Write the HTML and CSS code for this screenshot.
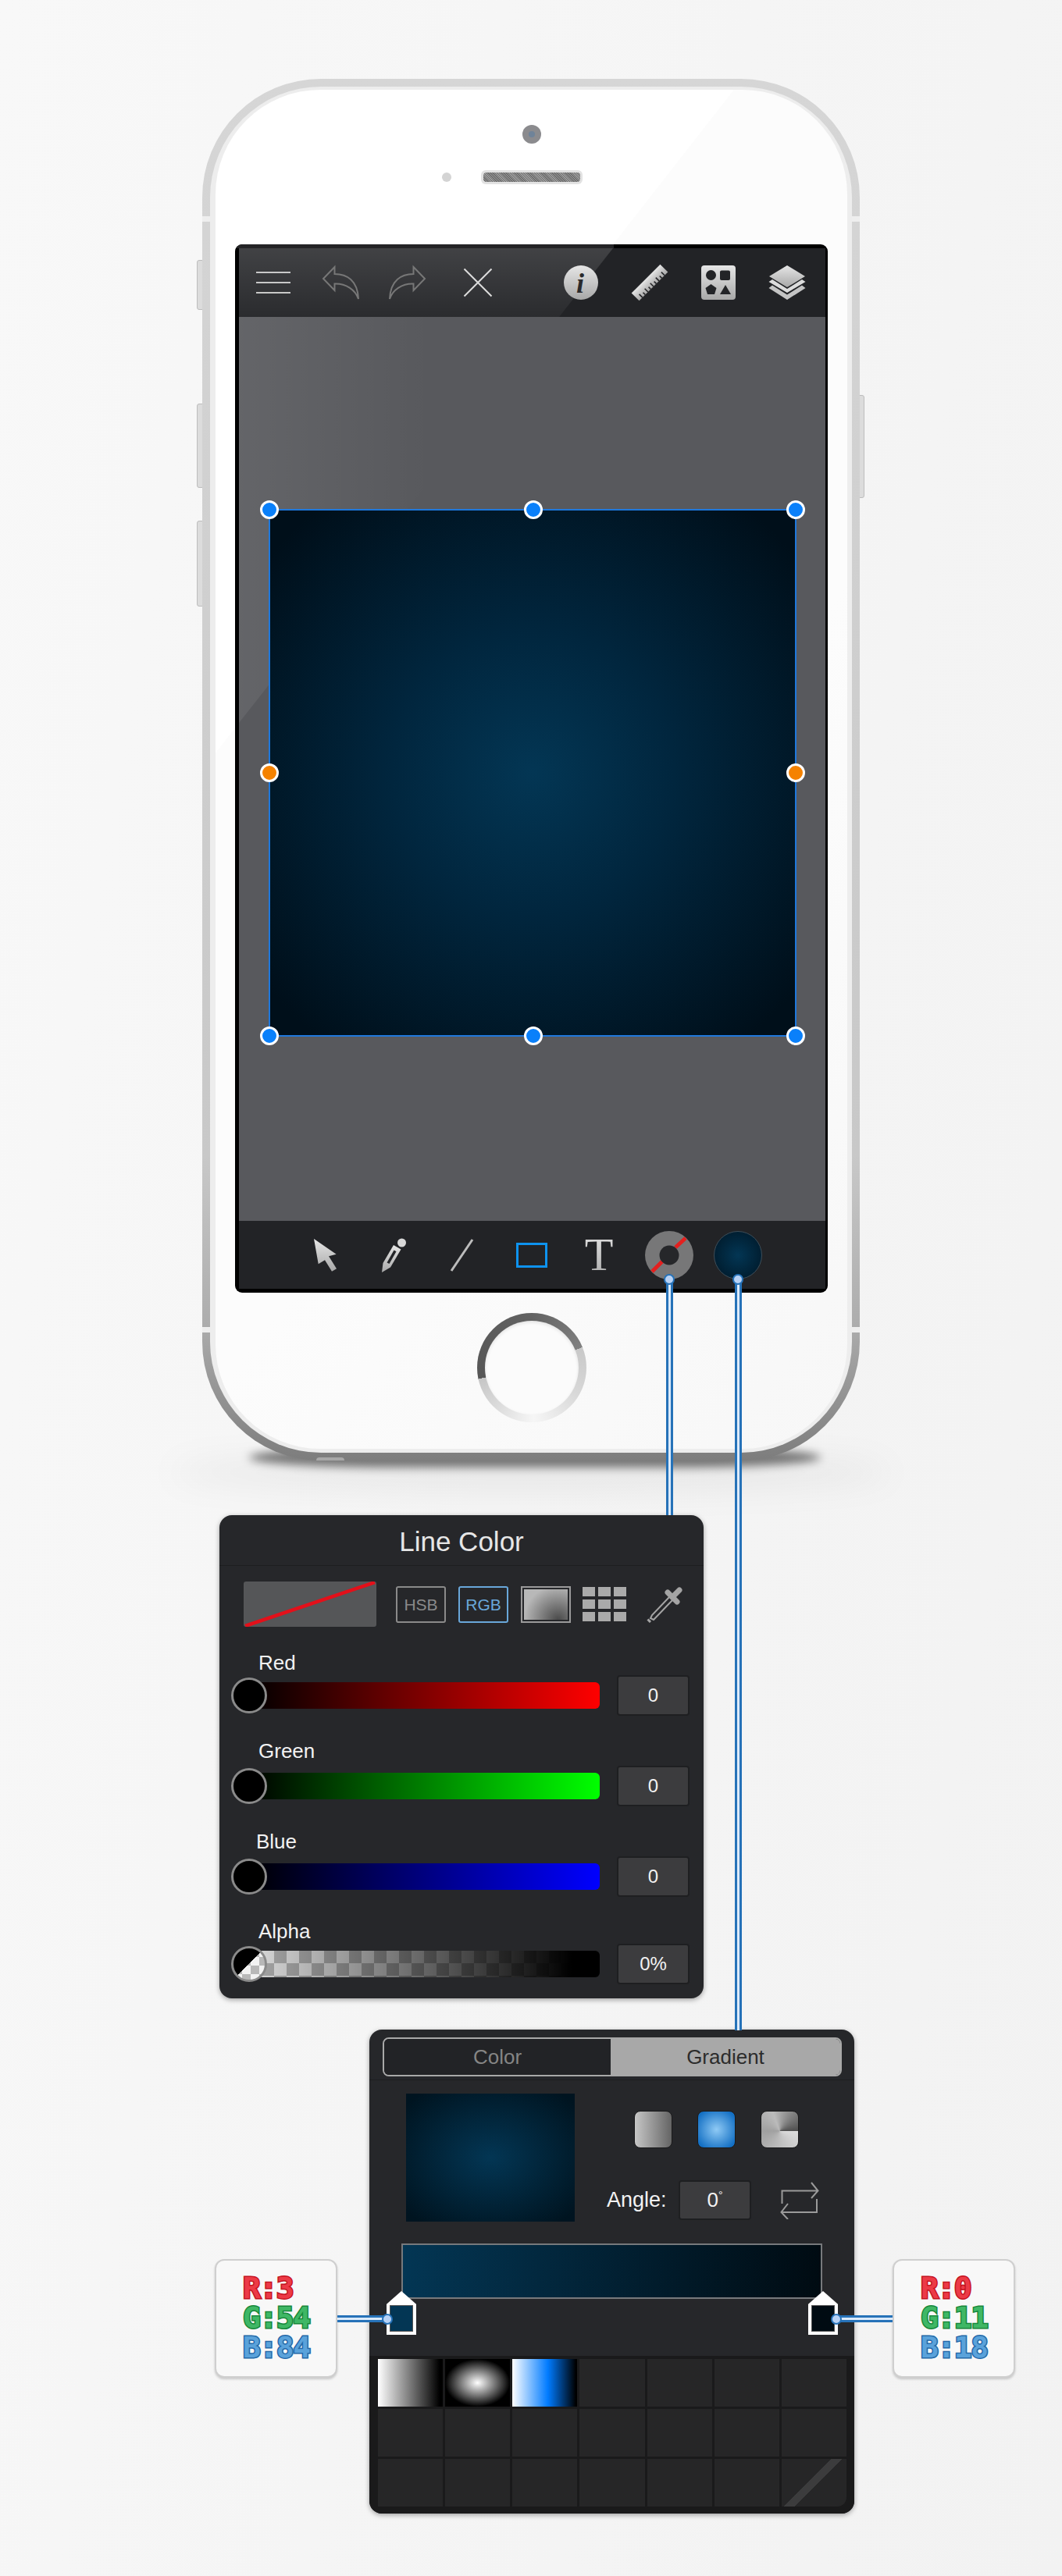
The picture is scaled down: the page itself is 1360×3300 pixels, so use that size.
FILE: index.html
```html
<!DOCTYPE html>
<html lang="en">
<head>
    <meta charset="UTF-8">
    <title>Gradient fill in the drawing app</title>
    <link rel="stylesheet" href="styles.css">
</head>
<body>
    <svg class="svg-defs" width="0" height="0" aria-hidden="true">
        <defs>
            <linearGradient id="metal" x1="0" y1="0" x2="0" y2="1">
                <stop offset="0" stop-color="#e6e6e6"/>
                <stop offset="1" stop-color="#a8a8a8"/>
            </linearGradient>
        </defs>
    </svg>

    <div class="stage">
        <!-- phone -->
        <div class="phone">
            <span class="phone-shadow"></span>
            <span class="phone-shadow phone-shadow-wide"></span>
            <span class="side-btn side-btn-1"></span>
            <span class="side-btn side-btn-2"></span>
            <span class="side-btn side-btn-3"></span>
            <span class="side-btn side-btn-4"></span>
            <span class="bottom-nub"></span>
            <div class="bevel">
                <div class="face">
                    <div class="camera"><span></span></div>
                    <div class="earpiece">
                        <span class="sensor"></span>
                        <span class="speaker"><span></span></span>
                    </div>

                    <div class="screen">
                        <div class="toolbar">
                            <div class="toolbar-left">
                                <svg class="icon48" viewBox="0 0 48 48">
                                    <path d="M2 11H46M2 24H46M2 37H46" stroke="#c8c8c8" stroke-width="2" fill="none"/>
                                </svg>
                                <svg class="icon48" viewBox="0 0 48 48">
                                    <path d="M2 19L16.500 4V13C32 13 46 21 47 45C43 33 31 25 16.500 25.500V34Z" stroke="#777" stroke-width="2" fill="none"/>
                                </svg>
                                <svg class="icon48" viewBox="0 0 48 48">
                                    <path d="M46 19L31.500 4V13C16 13 2 21 1 45C5 33 17 25 31.500 25.500V34Z" stroke="#777" stroke-width="2" fill="none"/>
                                </svg>
                                <svg class="icon48 icon-close" viewBox="0 0 48 48">
                                    <path d="M6.500 6.500L41.500 41.500M41.500 6.500L6.500 41.500" stroke="#dcdcdc" stroke-width="2" fill="none"/>
                                </svg>
                            </div>
                            <div class="toolbar-right">
                                <svg class="icon48" viewBox="0 0 48 48">
                                    <circle cx="24" cy="24" r="22" fill="url(#metal)"/>
                                    <text x="23" y="37" class="info-i">i</text>
                                </svg>
                                <svg class="icon48" viewBox="0 0 48 48">
                                    <g transform="rotate(-45 24 24)">
                                        <rect x="-2" y="17" width="52" height="14" fill="url(#metal)"/>
                                        <path d="M4 31V25M9 31V27M14 31V25M19 31V27M24 31V25M29 31V27M34 31V25M39 31V27M44 31V25" stroke="#232427" stroke-width="1.600"/>
                                    </g>
                                </svg>
                                <svg class="icon48" viewBox="0 0 48 48">
                                    <rect x="2" y="2" width="44" height="44" rx="4" fill="url(#metal)"/>
                                    <circle cx="14.500" cy="14.500" r="6.500" fill="#232427"/>
                                    <rect x="26" y="8.500" width="13" height="12.500" rx="2" fill="#232427"/>
                                    <path d="M14.500 26L21.500 31L19 39H10L7.500 31Z" fill="#232427"/>
                                    <path d="M33 27L40 39H26Z" fill="#232427"/>
                                </svg>
                                <svg class="icon48" viewBox="0 0 48 48">
                                    <path d="M24 2L47 16L24 30L1 16Z" fill="url(#metal)"/>
                                    <path d="M5 20L24 32L43 20L47.500 23L24 37L.5 23Z" fill="#dcdcdc"/>
                                    <path d="M5 27.500L24 39.500L43 27.500L47.500 31L24 46L.5 31Z" fill="#c4c4c4"/>
                                </svg>
                            </div>
                        </div>

                        <div class="canvas">
                            <div class="shape">
                                <span class="handle handle-tl"></span>
                                <span class="handle handle-tc"></span>
                                <span class="handle handle-tr"></span>
                                <span class="handle handle-ml handle-orange"></span>
                                <span class="handle handle-mr handle-orange"></span>
                                <span class="handle handle-bl"></span>
                                <span class="handle handle-bc"></span>
                                <span class="handle handle-br"></span>
                            </div>
                        </div>

                        <div class="tools">
                            <div class="tool">
                                <svg width="30" height="42" viewBox="0 0 30 42">
                                    <path d="M0 0L28.600 19.700L19 22.300L29 38.300L23 41.700L14 27.300L5.700 32.300Z" fill="url(#metal)"/>
                                </svg>
                            </div>
                            <div class="tool">
                                <svg width="32" height="44" viewBox="0 0 32 44">
                                    <circle cx="25.500" cy="6" r="5.500" fill="#d8d8d8"/>
                                    <path d="M1.500 32L15 9L24.500 14.500L11 37.500L0 44Z" fill="url(#metal)"/>
                                    <path d="M6.500 31.500L15.500 15.500L18.500 17.300L9.500 33Z" fill="#232427"/>
                                </svg>
                            </div>
                            <div class="tool tool-line">
                                <svg width="31" height="42" viewBox="0 0 31 42">
                                    <path d="M29 1L2 41" stroke="#bcbcbc" stroke-width="3" fill="none"/>
                                </svg>
                            </div>
                            <div class="tool"><span class="tool-rect"></span></div>
                            <div class="tool">
                                <svg width="40" height="68" viewBox="0 0 40 68">
                                    <text x="18" y="53" class="tool-t">T</text>
                                </svg>
                            </div>
                            <div class="tool">
                                <svg width="62" height="62" viewBox="0 0 62 62">
                                    <circle cx="31" cy="31" r="31" fill="#777778"/>
                                    <path d="M52 9L39 21M22 39L9 52" stroke="#e3201f" stroke-width="5" fill="none"/>
                                    <circle cx="31" cy="31" r="12.500" fill="#26272a"/>
                                </svg>
                            </div>
                            <div class="tool"><span class="fill-dot"></span></div>
                        </div>
                    </div>

                    <div class="home"><span></span></div>
                </div>
            </div>
        </div>

        <!-- line color panel -->
        <div class="panel line-panel">
            <div class="panel-title">Line Color</div>
            <div class="mode-row">
                <div class="none-swatch">
                    <svg width="170" height="58" viewBox="0 0 170 58" preserveAspectRatio="none">
                        <path d="M2 57L168 1" stroke="#e3101a" stroke-width="4.500"/>
                    </svg>
                </div>
                <div class="mode-btn">HSB</div>
                <div class="mode-btn mode-btn-on">RGB</div>
                <div class="mode-gradient"><span></span></div>
                <div class="mode-grid">
                    <span></span><span></span><span></span>
                    <span></span><span></span><span></span>
                    <span></span><span></span><span></span>
                </div>
                <svg class="dropper" width="47" height="47" viewBox="0 0 47 47">
                    <path d="M27 8L39 20" stroke="#a4a4a4" stroke-width="7" stroke-linecap="round"/>
                    <path d="M33 14L42 5" stroke="#a4a4a4" stroke-width="7" stroke-linecap="round"/>
                    <path d="M29 14L7 37L5 41L9 43L33 18" stroke="#a4a4a4" stroke-width="2" fill="none"/>
                    <path d="M1.500 42.500L5 46" stroke="#a4a4a4" stroke-width="3"/>
                </svg>
            </div>

            <div class="slider">
                <div class="slider-label">Red</div>
                <div class="slider-row">
                    <div class="track track-red"><span class="knob"></span></div>
                    <div class="value">0</div>
                </div>
            </div>
            <div class="slider">
                <div class="slider-label slider-label-tall">Green</div>
                <div class="slider-row">
                    <div class="track track-green"><span class="knob"></span></div>
                    <div class="value">0</div>
                </div>
            </div>
            <div class="slider">
                <div class="slider-label slider-label-tall slider-label-blue">Blue</div>
                <div class="slider-row">
                    <div class="track track-blue"><span class="knob"></span></div>
                    <div class="value">0</div>
                </div>
            </div>
            <div class="slider slider-alpha">
                <div class="slider-label">Alpha</div>
                <div class="slider-row">
                    <div class="track track-alpha"><span class="knob knob-alpha"></span></div>
                    <div class="value">0%</div>
                </div>
            </div>
        </div>

        <!-- fill panel with its two readouts -->
        <div class="gradient-row">
            <div class="readout">
                <div class="rd-r">R:3</div>
                <div class="rd-g">G:54</div>
                <div class="rd-b">B:84</div>
            </div>

            <div class="panel gradient-panel">
                <div class="segment-wrap">
                    <div class="segment">
                        <div class="segment-off">Color</div>
                        <div class="segment-on">Gradient</div>
                    </div>
                </div>

                <div class="grad-main">
                    <div class="grad-preview"></div>
                    <div class="grad-side">
                        <div class="grad-types">
                            <span class="grad-type grad-linear"></span>
                            <span class="grad-type grad-radial"></span>
                            <span class="grad-type grad-conic"></span>
                        </div>
                        <div class="angle-row">
                            <span class="angle-label">Angle:</span>
                            <span class="angle-box">0<sup>°</sup></span>
                            <svg width="50" height="48" viewBox="0 0 50 48">
                                <path d="M2.500 28V11.500H48M40 1L48.500 11.500L40 21M47 22V39H2M10 28L1.500 39L10 48" stroke="#9a9a9a" stroke-width="2" fill="none"/>
                            </svg>
                        </div>
                    </div>
                </div>

                <div class="grad-bar-wrap">
                    <div class="grad-bar"></div>
                    <span class="stop stop-left"><span></span></span>
                    <span class="stop stop-right"><span></span></span>
                </div>

                <div class="presets">
                    <span class="preset preset-1"></span>
                    <span class="preset preset-2"></span>
                    <span class="preset preset-3"></span>
                    <span class="preset"></span><span class="preset"></span><span class="preset"></span><span class="preset"></span>
                    <span class="preset"></span><span class="preset"></span><span class="preset"></span><span class="preset"></span>
                    <span class="preset"></span><span class="preset"></span><span class="preset"></span>
                    <span class="preset"></span><span class="preset"></span><span class="preset"></span><span class="preset"></span>
                    <span class="preset"></span><span class="preset"></span><span class="preset preset-none"></span>
                </div>
            </div>

            <div class="readout readout-right">
                <div class="rd-r">R:0</div>
                <div class="rd-g">G:11</div>
                <div class="rd-b">B:18</div>
            </div>
        </div>

        <!-- connector lines, drawn over everything -->
        <div class="wire wire-v wire-line"></div>
        <div class="wire wire-v wire-fill"></div>
        <div class="wire wire-h wire-stop-left"></div>
        <div class="wire wire-h wire-stop-right"></div>
    </div>
</body>
</html>
```

FILE: styles.css
```css
body {
    margin: 0;
    font-family: "Liberation Sans", Arial, sans-serif;
    background: linear-gradient(100deg, #f8f8f8, #f2f2f2);
}

.svg-defs {
    position: absolute;
}

.stage {
    position: relative;
    width: 1360px;
    height: 3300px;
    padding-top: 101px;
    box-sizing: border-box;
    overflow: hidden;
}

/* phone body */
.phone {
    position: relative;
    width: 842px;
    height: 1770px;
    margin-left: 259px;
    padding: 10px;
    box-sizing: border-box;
    border-radius: 152px;
    background: linear-gradient(to bottom, #d6d6d6, #c8c8c8 78%, #adadad 90%, #7d7d7d);
}

.phone::before,
.phone::after {
    content: "";
    position: absolute;
    left: 0;
    right: 0;
    height: 7px;
    background: #eeeeee;
}

.phone::before {
    top: 176px;
}

.phone::after {
    top: 1599px;
}

.phone-shadow {
    position: absolute;
    z-index: -1;
    left: 60px;
    right: 50px;
    bottom: -9px;
    height: 26px;
    border-radius: 50% / 100%;
    background: rgba(0, 0, 0, 0.5);
    filter: blur(6px);
}

.phone-shadow-wide {
    left: -40px;
    right: -40px;
    bottom: -40px;
    height: 50px;
    border-radius: 50%;
    background: rgba(0, 0, 0, 0.05);
    filter: blur(20px);
}

.side-btn {
    position: absolute;
    z-index: -1;
    left: -7px;
    width: 10px;
    border: 1px solid #bdbdbd;
    border-radius: 3px;
    background: #dcdcdc;
    box-sizing: border-box;
}

.side-btn-1 {
    top: 232px;
    height: 64px;
}

.side-btn-2 {
    top: 416px;
    height: 108px;
}

.side-btn-3 {
    top: 566px;
    height: 110px;
}

.side-btn-4 {
    top: 405px;
    left: auto;
    right: -6px;
    height: 132px;
}

.bottom-nub {
    position: absolute;
    left: 146px;
    bottom: 0;
    width: 36px;
    height: 4px;
    border-radius: 18px 18px 0 0;
    background: #a8a8a8;
}

.bevel {
    position: relative;
    z-index: 1;
    height: 100%;
    padding: 4px 6px 5px 7px;
    box-sizing: border-box;
    border-radius: 142px;
    background: #ededed;
}

.face {
    display: flex;
    flex-direction: column;
    align-items: flex-start;
    height: 100%;
    border-radius: 134px;
    background: linear-gradient(128deg, #ffffff 0 30.6%, #fcfcfc 30.6% 60%, #f7f7f7);
    overflow: hidden;
}

.camera {
    display: flex;
    align-items: center;
    justify-content: center;
    width: 24px;
    height: 24px;
    margin: 45px auto 0;
    border-radius: 50%;
    background: #8b8b8e;
}

.camera span {
    width: 8px;
    height: 8px;
    border-radius: 50%;
    background: #6f8399;
}

.earpiece {
    display: grid;
    grid-template-columns: 1fr 130px 1fr;
    align-items: center;
    width: 100%;
    margin-top: 34px;
}

.sensor {
    grid-column: 1;
    justify-self: end;
    width: 12px;
    height: 12px;
    margin-right: 38px;
    border-radius: 50%;
    background: #d4d4d4;
}

.speaker {
    grid-column: 2;
    display: block;
    height: 18px;
    padding: 3px;
    box-sizing: border-box;
    border-radius: 6px;
    background: #e2e2e2;
}

.speaker span {
    display: block;
    height: 12px;
    border-radius: 4px;
    background: repeating-linear-gradient(45deg, #6d6d6d 0 1px, #9c9c9c 1px 2px);
}

/* screen */
.screen {
    position: relative;
    display: flex;
    flex-direction: column;
    width: 751px;
    height: 1333px;
    margin: 77px 0 0 25px;
    padding: 5px 3px 5px 5px;
    border-radius: 9px;
    background: #000;
    overflow: hidden;
}

.screen::before {
    content: "";
    position: absolute;
    top: 0;
    left: 0;
    width: 485px;
    height: 5px;
    background: #242426;
}

.toolbar {
    position: relative;
    display: flex;
    align-items: center;
    justify-content: space-between;
    flex: 0 0 88px;
    padding: 0 25px 0 20px;
    background: #222326;
}

.toolbar::before {
    content: "";
    position: absolute;
    inset: 0;
    background: linear-gradient(to bottom, rgba(255, 255, 255, 0.14), rgba(255, 255, 255, 0.04));
    clip-path: polygon(0 0, 479px 0, 410px 100%, 0 100%);
}

.toolbar-left,
.toolbar-right {
    position: relative;
    display: flex;
}

.toolbar-left {
    gap: 38px;
}

.toolbar-right {
    gap: 40px;
}

.icon48 {
    display: block;
    width: 48px;
    height: 48px;
}

.icon-close {
    margin-left: 4px;
}

.info-i {
    font-family: "Liberation Serif", serif;
    font-size: 36px;
    font-weight: bold;
    font-style: italic;
    fill: #2a2a2c;
    text-anchor: middle;
}

.canvas {
    position: relative;
    flex: 1;
    padding: 246px 0 0 38px;
    background: #58595d;
}

.canvas::before {
    content: "";
    position: absolute;
    top: 0;
    left: 0;
    width: 410px;
    height: 520px;
    background: linear-gradient(to right, rgba(255, 255, 255, 0.07), rgba(255, 255, 255, 0) 60%);
    clip-path: polygon(0 0, 100% 0, 0 100%);
}

.shape {
    position: relative;
    width: 676px;
    height: 676px;
    box-sizing: border-box;
    border: 2px solid #1f78dc;
    background: radial-gradient(circle farthest-corner, #033654, #01263e 38%, #000f1a 92%);
}

.handle {
    position: absolute;
    width: 24px;
    height: 24px;
    box-sizing: border-box;
    border: 3px solid #fff;
    border-radius: 50%;
    background: #0a80fa;
}

.handle-orange {
    background: #f58200;
}

.handle-tl { top: -13px; left: -13px; }
.handle-tc { top: -13px; left: 325px; }
.handle-tr { top: -13px; right: -13px; }
.handle-ml { top: 324px; left: -13px; }
.handle-mr { top: 324px; right: -13px; }
.handle-bl { bottom: -13px; left: -13px; }
.handle-bc { bottom: -13px; left: 325px; }
.handle-br { bottom: -13px; right: -13px; }

.tools {
    display: grid;
    grid-template-columns: repeat(7, 88px);
    align-items: center;
    flex: 0 0 87px;
    padding-left: 67px;
    background: #222326;
}

.tool {
    display: flex;
    align-items: center;
    justify-content: center;
}

.tool-line {
    padding-right: 4px;
    box-sizing: border-box;
}

.tool-rect {
    width: 40px;
    height: 32px;
    box-sizing: border-box;
    border: 3px solid #0e93ef;
}

.tool-t {
    font-family: "Liberation Serif", serif;
    font-size: 60px;
    text-anchor: middle;
    fill: url(#metal);
}

.fill-dot {
    width: 62px;
    height: 62px;
    box-sizing: border-box;
    border: 1px solid #3d4d58;
    border-radius: 50%;
    background: radial-gradient(circle, #033654, #001a2b 85%);
}

.home {
    width: 140px;
    height: 140px;
    margin: 26px auto 0;
    padding: 10px;
    box-sizing: border-box;
    border-radius: 50%;
    background: conic-gradient(#626262 0deg, #808080 68deg, #c8c8c8 68deg, #d8d8d8 120deg, #f6f6f6 178deg, #dcdcdc 220deg, #c6c6c6 258deg, #565656 258deg, #626262 360deg);
}

.home span {
    display: block;
    height: 100%;
    border-radius: 50%;
    background: #fbfbfb;
    box-shadow: inset 0 2px 4px rgba(0, 0, 0, 0.1);
}

/* shared panel look */
.panel {
    border-radius: 16px;
    background: #26272a;
    box-shadow: 0 2px 6px rgba(0, 0, 0, 0.35);
}

.line-panel {
    width: 620px;
    height: 619px;
    margin: 70px 0 0 281px;
    overflow: hidden;
}

.panel-title {
    height: 65px;
    box-sizing: border-box;
    border-bottom: 1px solid #1d1e20;
    color: #e6e6e6;
    font-size: 35px;
    line-height: 68px;
    text-align: center;
}

.mode-row {
    display: flex;
    align-items: center;
    height: 58px;
    margin: 20px 0 0 31px;
}

.none-swatch {
    width: 170px;
    height: 58px;
    border-radius: 3px;
    background: #555658;
    overflow: hidden;
}

.none-swatch svg {
    display: block;
}

.mode-btn {
    width: 64px;
    height: 47px;
    margin-left: 25px;
    box-sizing: border-box;
    border: 2px solid #8a8a8a;
    border-radius: 3px;
    color: #8a8a8a;
    font-size: 21px;
    line-height: 44px;
    text-align: center;
}

.mode-btn-on {
    margin-left: 16px;
    border-color: #69a7da;
    color: #69a7da;
}

.mode-gradient {
    width: 64px;
    height: 47px;
    margin-left: 16px;
    padding: 2px;
    box-sizing: border-box;
    border: 2px solid #9a9a9a;
}

.mode-gradient span {
    display: block;
    height: 100%;
    background: radial-gradient(circle at 78% 100%, #4a4a4a, #b8b8b8 75%);
}

.mode-grid {
    display: grid;
    grid-template-columns: repeat(3, 16px);
    grid-auto-rows: 12px;
    gap: 4px;
    margin-left: 15px;
}

.mode-grid span {
    background: #aaaaaa;
}

.dropper {
    margin-left: 26px;
}

.slider {
    margin-top: 30px;
}

.slider-alpha {
    margin-top: 28px;
}

.slider-label {
    height: 32px;
    margin-left: 50px;
    color: #f2f2f2;
    font-size: 26px;
    line-height: 32px;
}

.slider-label-tall {
    height: 34px;
    line-height: 30px;
}

.slider-label-blue {
    margin-left: 47px;
}

.slider-row {
    display: flex;
    align-items: center;
    height: 52px;
    padding-left: 38px;
}

.track {
    position: relative;
    width: 449px;
    height: 34px;
    border-radius: 0 6px 6px 0;
}

.track-red {
    background: linear-gradient(to right, #000, #ff0000);
}

.track-green {
    background: linear-gradient(to right, #000, #00ff00);
}

.track-blue {
    background: linear-gradient(to right, #000, #0000ff);
}

.track-alpha {
    background: linear-gradient(to right, rgba(0, 0, 0, 0), #000 92%), repeating-conic-gradient(#dcdcdc 0 25%, #a8a8a8 0 50%) 0 0 / 32px 32px;
}

.knob {
    position: absolute;
    top: -6px;
    left: -23px;
    width: 46px;
    height: 46px;
    box-sizing: border-box;
    border: 3px solid #8a8a8a;
    border-radius: 50%;
    background: #000;
}

.knob-alpha {
    background: linear-gradient(135deg, #000 50%, transparent 50%), repeating-conic-gradient(#f2f2f2 0 25%, #b8b8b8 0 50%) 0 0 / 22px 22px;
}

.value {
    width: 93px;
    height: 52px;
    margin-left: 22px;
    box-sizing: border-box;
    border: 2px solid #1e1f21;
    border-radius: 4px;
    background: #3c3c3e;
    color: #f2f2f2;
    font-size: 24px;
    line-height: 48px;
    text-align: center;
}

/* fill panel row */
.gradient-row {
    display: flex;
    align-items: flex-start;
    margin-top: 40px;
    padding-left: 275px;
}

.readout {
    width: 157px;
    height: 152px;
    margin-top: 294px;
    padding: 16px 0 0 34px;
    box-sizing: border-box;
    border: 2px solid #cfcfcf;
    border-radius: 12px;
    background: #f8f8f8;
    box-shadow: 0 2px 3px rgba(0, 0, 0, 0.18);
    font-family: "DejaVu Sans Mono", monospace;
    font-size: 38px;
    font-weight: bold;
    letter-spacing: -1.500px;
    line-height: 38px;
    -webkit-text-stroke-width: 3px;
    paint-order: stroke fill;
}

.readout-right {
    margin-left: 49px;
}

.rd-r {
    color: #ec3a46;
    -webkit-text-stroke-color: #c3141f;
}

.rd-g {
    color: #3fb765;
    -webkit-text-stroke-color: #17873a;
}

.rd-b {
    color: #5aa2da;
    -webkit-text-stroke-color: #2468a8;
}

.gradient-panel {
    position: relative;
    width: 621px;
    height: 620px;
    margin-left: 41px;
    background: #26272a;
    overflow: hidden;
}

.segment-wrap {
    height: 65px;
    padding: 10px 16px 0 17px;
    box-sizing: border-box;
    border-bottom: 1px solid #1d1e20;
}

.segment {
    display: flex;
    height: 50px;
    border: 2px solid #a8a8a8;
    border-radius: 8px;
    box-sizing: border-box;
    overflow: hidden;
    font-size: 26px;
    line-height: 46px;
    text-align: center;
}

.segment-off {
    flex: 0 0 290px;
    color: #858585;
    background: #222326;
}

.segment-on {
    flex: 1;
    color: #2c2c2c;
    background: #a8a8a8;
}

.grad-main {
    display: flex;
    height: 209px;
    padding: 17px 0 0 47px;
    box-sizing: border-box;
}

.grad-preview {
    width: 216px;
    height: 164px;
    background: radial-gradient(ellipse farthest-corner, #033654, #001420 92%);
}

.grad-side {
    margin-left: 41px;
}

.grad-types {
    display: flex;
    margin: 22px 0 0 35px;
}

.grad-type {
    width: 49px;
    height: 48px;
    margin-right: 32px;
    box-sizing: border-box;
    border: 1px solid #1a1a1b;
    border-radius: 8px;
}

.grad-linear {
    background: linear-gradient(to right, #c6c6c6, #646464);
}

.grad-radial {
    background: radial-gradient(circle, #8fcaf5, #1470c4 85%);
}

.grad-conic {
    background: conic-gradient(from 90deg at 50% 54%, #dcdcdc, #a0a0a0 180deg, #bbbbbb 250deg, #4e4e4e 360deg);
}

.angle-row {
    display: flex;
    align-items: center;
    margin-top: 41px;
}

.angle-label {
    width: 92px;
    color: #f2f2f2;
    font-size: 27px;
}

.angle-box {
    width: 93px;
    height: 51px;
    box-sizing: border-box;
    border: 2px solid #1e1f21;
    border-radius: 4px;
    background: #3c3c3e;
    color: #f2f2f2;
    font-size: 26px;
    line-height: 46px;
    text-align: center;
}

.angle-box sup {
    font-size: 14px;
    line-height: 0;
}

.angle-row svg {
    margin-left: 37px;
}

.grad-bar-wrap {
    position: relative;
    height: 144px;
}

.grad-bar {
    width: 539px;
    height: 71px;
    margin-left: 41px;
    box-sizing: border-box;
    border: 2px solid #77797c;
    background: linear-gradient(to right, #033654, #000b12);
}

.stop {
    position: absolute;
    top: 61px;
    width: 38px;
    height: 56px;
    padding: 18px 4px 4px;
    box-sizing: border-box;
    background: #fff;
    clip-path: polygon(50% 0, 100% 30%, 100% 100%, 0 100%, 0 30%);
}

.stop span {
    display: block;
    height: 100%;
    box-sizing: border-box;
    border: 1px solid #555;
}

.stop-left {
    left: 22px;
}

.stop-left span {
    background: #033654;
}

.stop-right {
    left: 562px;
}

.stop-right span {
    background: #000b12;
}

.presets {
    display: grid;
    grid-template-columns: repeat(7, 1fr);
    grid-auto-rows: 61px;
    gap: 3px;
    height: 202px;
    padding: 4px 10px 8px 11px;
    box-sizing: border-box;
    background: #1a1a1b;
}

.preset {
    background: #262627;
}

.preset-1 {
    background: linear-gradient(to right, #fff, #000 95%);
}

.preset-2 {
    background: radial-gradient(closest-side, #fff, #000);
}

.preset-3 {
    background: linear-gradient(to right, #fff, #007bff 55%, #000 98%);
}

.preset-none {
    border-bottom-right-radius: 12px;
    background: linear-gradient(135deg, #262627 0 44%, #3c3c3d 44% 54%, #262627 54%);
}

/* connector lines */
.wire {
    position: absolute;
    z-index: 2;
    box-sizing: border-box;
    border: 3px solid #2672b8;
    background: #dbeafa;
}

.wire::before {
    content: "";
    position: absolute;
    width: 14px;
    height: 14px;
    box-sizing: border-box;
    border: 2px solid #2672b8;
    border-radius: 50%;
    background: #b8d2f5;
}

.wire-v {
    width: 9px;
    border-top: 0;
    border-bottom: 0;
}

.wire-v::before {
    top: -7px;
    left: -5.500px;
}

.wire-line {
    top: 1639px;
    left: 852.500px;
    height: 302px;
}

.wire-fill {
    top: 1639px;
    left: 940.500px;
    height: 962px;
}

.wire-h {
    top: 2966px;
    height: 9px;
    border-left: 0;
    border-right: 0;
}

.wire-stop-left {
    left: 432px;
    width: 64px;
}

.wire-stop-left::before {
    top: -5.500px;
    right: -7px;
}

.wire-stop-right {
    left: 1071px;
    width: 72px;
}

.wire-stop-right::before {
    top: -5.500px;
    left: -7px;
}
```
